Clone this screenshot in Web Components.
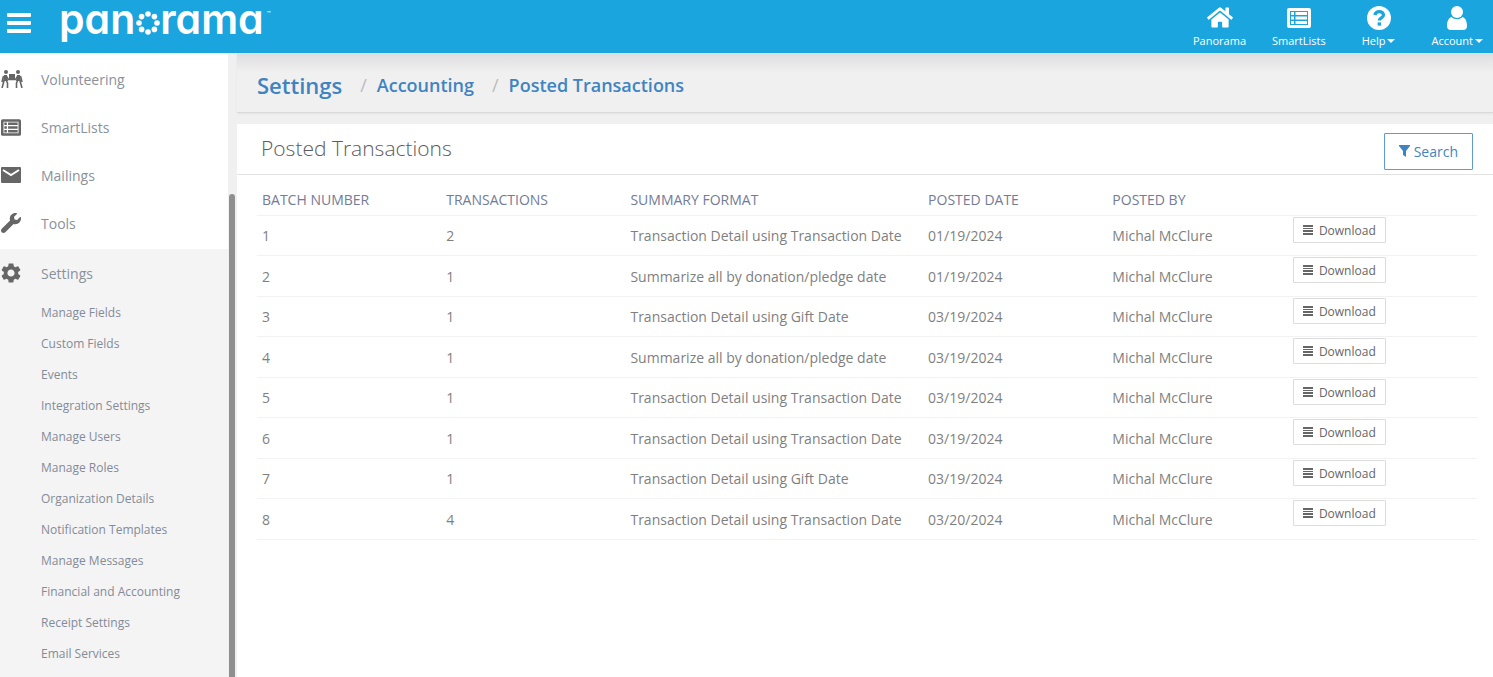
<!DOCTYPE html>
<html lang="en">
<head>
<meta charset="utf-8">
<title>Posted Transactions</title>
<style>
  body {
    margin: 0;
    font-family: "Open Sans", "Noto Sans", sans-serif;
    font-size: 14px;
    color: #7f7f7f;
    background: #fff;
  }
</style>
</head>
<body>
<app-shell>
  <top-bar slot="header">
    <top-link icon="home">Panorama</top-link>
    <top-link icon="list">SmartLists</top-link>
    <top-link icon="help" menu>Help</top-link>
    <top-link icon="user" menu>Account</top-link>
  </top-bar>

  <side-nav slot="nav">
    <nav-item icon="carry">Volunteering</nav-item>
    <nav-item icon="list">SmartLists</nav-item>
    <nav-item icon="mail">Mailings</nav-item>
    <nav-item icon="wrench">Tools</nav-item>
    <nav-group slot="open">
      <nav-item slot="title" icon="gear">Settings</nav-item>
      <sub-item>Manage Fields</sub-item>
      <sub-item>Custom Fields</sub-item>
      <sub-item>Events</sub-item>
      <sub-item>Integration Settings</sub-item>
      <sub-item>Manage Users</sub-item>
      <sub-item>Manage Roles</sub-item>
      <sub-item>Organization Details</sub-item>
      <sub-item>Notification Templates</sub-item>
      <sub-item>Manage Messages</sub-item>
      <sub-item>Financial and Accounting</sub-item>
      <sub-item>Receipt Settings</sub-item>
      <sub-item>Email Services</sub-item>
    </nav-group>
  </side-nav>

  <crumb-trail>
    <crumb-link first>Settings</crumb-link>
    <crumb-link>Accounting</crumb-link>
    <crumb-link>Posted Transactions</crumb-link>
  </crumb-trail>
  <content-panel>
    <span slot="title">Posted Transactions</span>
    <search-button slot="action">Search</search-button>
    <batch-table></batch-table>
  </content-panel>
</app-shell>

<script>
(function () {
  const icons = {
    home: ['0 0 576 512', '<path d="M280.37 148.26L96 300.11V464a16 16 0 0 0 16 16l112.06-.29a16 16 0 0 0 15.92-16V368a16 16 0 0 1 16-16h64a16 16 0 0 1 16 16v95.64a16 16 0 0 0 16 16.05L464 480a16 16 0 0 0 16-16V300L295.67 148.26a12.19 12.19 0 0 0-15.3 0zM571.6 251.47L488 182.56V44.05a12 12 0 0 0-12-12h-56a12 12 0 0 0-12 12v72.61L318.47 43a48 48 0 0 0-61 0L4.34 251.47a12 12 0 0 0-1.6 16.9l25.5 31A12 12 0 0 0 45.15 301l235.22-193.74a12.19 12.19 0 0 1 15.3 0L530.9 301a12 12 0 0 0 16.9-1.6l25.5-31a12 12 0 0 0-1.7-16.93z"/>'],
    list: ['0 0 24 20', '<path fill-rule="evenodd" d="M2 0h20a2 2 0 0 1 2 2v16a2 2 0 0 1-2 2H2a2 2 0 0 1-2-2V2a2 2 0 0 1 2-2zM3 3v14h18V3z"/><path d="M4 4h3v3H4zM4 8.500h3v3H4zM4 13h3v3H4zM8.500 4H20v3H8.500zM8.500 8.500H20v3H8.500zM8.500 13H20v3H8.500z"/>'],
    help: ['0 0 24 24', '<circle cx="12" cy="12" r="12"/><path d="M7.800 9c.6-2.200 2.200-3.400 4.400-3.400 2.500 0 4.300 1.400 4.300 3.500 0 2.900-4.200 2.700-4.200 5.500" fill="none" stroke="#1ba5df" stroke-width="3.200"/><rect x="10.600" y="16.400" width="3.400" height="3.200" fill="#1ba5df"/>'],
    user: ['0 0 20 24', '<circle cx="10" cy="6" r="6"/><path d="M4.500 11C7.500 14 12.500 14 15.500 11 18.500 12 20 15.500 20 20c0 2.500-1.500 4-3.500 4h-13C1.500 24 0 22.500 0 20c0-4.500 1.500-8 4.500-9z"/>'],
    carry: ['0 0 22 18', '<circle cx="5" cy="2" r="2"/><circle cx="17" cy="2" r="2"/><rect x="8" y="4" width="6" height="5"/><path d="M3 5h3l1 6H2zM16 5h3l1 6h-5z"/><path d="M5 6l2.500 3.500H11M17 6l-2.500 3.500H11M5 10l1.500 3v5M2.500 6L1 12M3 11l-2 7M17 10l-1.500 3v5M19.500 6l1.500 6M19 11l2 7" fill="none" stroke="currentColor" stroke-width="1.600"/>'],
    mail: ['0 0 20 16', '<path d="M1 0h18a1 1 0 0 1 1 1v14a1 1 0 0 1-1 1H1a1 1 0 0 1-1-1V1a1 1 0 0 1 1-1z"/><path d="M2 3l8 5 8-5" fill="none" stroke="#fff" stroke-width="2"/>'],
    wrench: ['0 0 512 512', '<path d="M507.730 109.100c-2.240-9.030-13.540-12.090-20.120-5.510l-74.360 74.360-67.880-11.310-11.310-67.880 74.360-74.360c6.620-6.620 3.430-17.900-5.660-20.160-47.380-11.740-99.550.91-136.580 37.930-39.640 39.640-50.550 97.100-34.050 147.200L18.740 402.760c-24.990 24.990-24.990 65.510 0 90.500 24.990 24.990 65.510 24.990 90.500 0l213.210-213.210c50.120 16.710 107.470 5.680 147.370-34.220 37.070-37.070 49.700-89.320 37.910-136.730z"/>'],
    gear: ['2 2 20 20', '<path d="M19.140 12.940c.04-.3.06-.61.06-.94 0-.32-.02-.64-.07-.94l2.030-1.580c.18-.14.23-.41.12-.61l-1.920-3.320c-.12-.22-.37-.29-.59-.22l-2.390.96c-.5-.38-1.030-.7-1.620-.94l-.36-2.540c-.04-.24-.24-.41-.48-.41h-3.840c-.24 0-.43.17-.47.41l-.36 2.540c-.59.24-1.130.57-1.620.94l-2.390-.96c-.22-.08-.47 0-.59.22L2.740 8.870c-.12.21-.08.47.12.61l2.030 1.580c-.05.3-.09.63-.09.94s.02.64.07.94l-2.030 1.580c-.18.14-.23.41-.12.61l1.920 3.320c.12.22.37.29.59.22l2.390-.96c.5.38 1.030.7 1.620.94l.36 2.540c.05.24.24.41.48.41h3.840c.24 0 .44-.17.47-.41l.36-2.540c.59-.24 1.130-.56 1.620-.94l2.390.96c.22.08.47 0 .59-.22l1.920-3.320c.12-.22.07-.47-.12-.61l-2.010-1.580zM12 15.600c-1.980 0-3.600-1.620-3.600-3.600s1.620-3.600 3.600-3.600 3.600 1.620 3.600 3.600-1.620 3.600-3.600 3.600z"/>'],
    filter: ['0 0 11 12', '<path d="M0 0h11v1L7 6v6L4 10V6L0 1z"/>'],
    rows: ['0 0 10 10', '<path d="M0 0h10v2H0zM0 3h10v1H0zM0 5h10v2H0zM0 8h10v2H0z"/>'],
    bars: ['0 0 24 20', '<rect width="24" height="4" rx="1"/><rect y="8" width="24" height="4" rx="1"/><rect y="16" width="24" height="4" rx="1"/>']
  };

  function svg(name, size) {
    const [box, body] = icons[name];
    return `<svg viewBox="${box}" width="${size[0]}" height="${size[1]}" fill="currentColor" aria-hidden="true">${body}</svg>`;
  }

  // registers an element whose shadow root is filled from render(host)
  function define(tag, render) {
    customElements.define(tag, class extends HTMLElement {
      constructor() {
        super();
        this.attachShadow({mode: "open"});
      }
      connectedCallback() {
        const tmpl = document.createElement('template');
        tmpl.innerHTML = render(this);
        this.shadowRoot.replaceChildren(tmpl.content.cloneNode(true));
      }
    });
  }

  define('app-shell', () => `<style>
    :host { display: flex; flex-direction: column; height: 100vh; }
    .body { flex: 1; min-height: 0; display: flex; overflow: hidden; }
    main { flex: 1; min-width: 0; display: flex; flex-direction: column; background: #f0f0f0; }
    </style>
    <slot name="header"></slot>
    <div class="body">
      <slot name="nav"></slot>
      <main><slot></slot></main>
    </div>`);

  define('top-bar', () => {
    let dots = '';
    for (let i = 0; i < 8; i++) {
      const a = Math.PI / 4 * i;
      dots += `<circle cx="${(12 + 9 * Math.sin(a)).toFixed(1)}" cy="${(12 + 9 * Math.cos(a)).toFixed(1)}" r="2.8"/>`;
    }
    return `<style>
    :host { display: flex; align-items: center; justify-content: space-between; height: 53px; padding: 0 10px 0 7px; color: #fff; background: #1ba5df; }
    .left { display: flex; align-items: center; gap: 28px; padding-bottom: 8px; }
    button { display: flex; padding: 0; border: 0; background: none; color: #fff; }
    .logo { color: #fff; text-decoration: none; font: 600 41px/36px Inter, sans-serif; font-feature-settings: "cv11"; padding-bottom: 8px; white-space: nowrap; }
    .o { position: relative; color: transparent; }
    .o svg { position: absolute; left: 1px; bottom: 9px; color: #fff; }
    sup { font-size: 6px; line-height: 6px; vertical-align: 18px; margin-left: 3px; }
    nav { display: flex; gap: 26px; }
    </style>
    <div class="left">
      <button aria-label="Menu">${svg('bars', [24, 20])}</button>
      <a class="logo" href="#">pan<span class="o">o<svg viewBox="0 0 24 24" width="24" height="24" fill="currentColor">${dots}</svg></span>rama<sup>™</sup></a>
    </div>
    <nav><slot></slot></nav>`;
  });

  const topSizes = {home: [26, 23], list: [24, 20], help: [24, 24], user: [20, 24]};
  define('top-link', el => `<style>
    :host { display: block; }
    :host([menu]) { margin-left: 10px; }
    a { display: flex; flex-direction: column; align-items: center; color: #fff; text-decoration: none; font-size: 11px; line-height: 14px; }
    .icon { display: flex; align-items: center; height: 24px; margin-bottom: 4px; }
    .label { display: flex; align-items: center; gap: 2px; }
    .caret { border: 4px solid transparent; border-top: 4px solid #fff; border-bottom: 0; }
    </style>
    <a href="#"><span class="icon">${svg(el.getAttribute('icon'), topSizes[el.getAttribute('icon')])}</span>
    <span class="label"><slot></slot>${el.hasAttribute('menu') ? '<i class="caret"></i>' : ''}</span></a>`);

  define('side-nav', () => `<style>
    :host { display: flex; width: 237px; flex: none; background: #fff; }
    nav { flex: 1; min-width: 0; display: flex; flex-direction: column; padding-top: 2px; }
    .track { width: 9px; box-sizing: border-box; padding: 141px 2px 0 1px; background: #f0f0f0; display: flex; }
    .thumb { flex: 1; background: #8f8f8f; border-radius: 3px 3px 0 0; }
    </style>
    <nav><slot></slot><slot name="open"></slot></nav>
    <div class="track"><div class="thumb"></div></div>`);

  const navSizes = {carry: [22, 18], list: [20, 17], mail: [20, 16], wrench: [20, 24], gear: [20, 20]};
  define('nav-item', el => `<style>
    :host { display: block; }
    a { display: flex; align-items: center; height: 48px; color: #8a919c; text-decoration: none; font-size: 14px; }
    .icon { display: flex; width: 40px; padding-left: 1px; color: #666; }
    </style>
    <a href="#"><span class="icon">${svg(el.getAttribute('icon'), navSizes[el.getAttribute('icon')])}</span><slot></slot></a>`);

  define('nav-group', () => `<style>
    :host { display: block; flex: 1; margin-top: 2px; background: #f4f4f4; }
    </style>
    <slot name="title"></slot><slot></slot>`);

  define('sub-item', () => `<style>
    :host { display: block; }
    a { display: block; padding-left: 41px; color: #848b98; text-decoration: none; font-size: 12px; line-height: 31px; }
    </style>
    <a href="#"><slot></slot></a>`);

  define('crumb-trail', () => `<style>
    :host { display: block; background: linear-gradient(#dedede, #f0f0f0 20px); border-bottom: 1px solid #dadada; box-shadow: 0 1px 2px #e4e4e4; margin-bottom: 11px; }
    nav { display: flex; align-items: center; height: 59px; padding: 4px 20px 0; box-sizing: border-box; }
    </style>
    <nav><slot></slot></nav>`);

  define('crumb-link', el => `<style>
    :host { display: block; font-size: 18px; font-weight: 600; }
    :host([first]) { font-size: 22px; }
    a { color: #3f84c1; text-decoration: none; }
    .sep { color: #bbb; font-weight: 400; padding: 0 10px 0 18px; }
    </style>
    ${el.hasAttribute('first') ? '' : '<span class="sep">/</span>'}<a href="#"><slot></slot></a>`);

  define('content-panel', () => `<style>
    :host { display: block; flex: 1; background: #fff; }
    header { display: flex; align-items: center; justify-content: space-between; height: 50px; padding: 0 20px 0 24px; border-bottom: 1px solid #e2e2e2; }
    h1 { margin: 0; padding-bottom: 2px; font-size: 21px; font-weight: 300; color: #5c5c5c; }
    .content { padding: 8px 16px 0 20px; }
    </style>
    <header><h1><slot name="title"></slot></h1><slot name="action"></slot></header>
    <div class="content"><slot></slot></div>`);

  define('search-button', () => `<style>
    :host { display: block; padding-top: 4px; }
    button { display: flex; align-items: center; gap: 4px; height: 37px; padding: 0 14px; border: 1px solid #5f9bd0; border-radius: 1px; background: #fff; color: #3f84c1; font: 14px "Open Sans", sans-serif; }
    </style>
    <button>${svg('filter', [11, 12])}<slot></slot></button>`);

  define('download-button', () => `<style>
    :host { display: block; }
    button { display: flex; align-items: center; gap: 6px; height: 26px; padding: 0 9px; border: 1px solid #dcdcdc; border-radius: 1px; background: #fff; color: #666; font: 12px "Open Sans", sans-serif; }
    </style>
    <button>${svg('rows', [10, 10])}<slot></slot></button>`);

  const detail = 'Transaction Detail using Transaction Date';
  const gift = 'Transaction Detail using Gift Date';
  const summary = 'Summarize all by donation/pledge date';
  const batches = [
    [1, 2, detail, '01/19/2024'],
    [2, 1, summary, '01/19/2024'],
    [3, 1, gift, '03/19/2024'],
    [4, 1, summary, '03/19/2024'],
    [5, 1, detail, '03/19/2024'],
    [6, 1, detail, '03/19/2024'],
    [7, 1, gift, '03/19/2024'],
    [8, 4, detail, '03/20/2024']
  ];
  define('batch-table', () => `<style>
    :host { display: block; }
    table { width: 100%; border-collapse: separate; border-spacing: 0; table-layout: fixed; font-size: 14px; }
    th, td { padding: 0 5px; text-align: left; font-weight: 400; border-bottom: 1px solid #f2f2f2; white-space: nowrap; box-sizing: border-box; }
    th { height: 33px; color: #737b98; }
    td { height: 40px; }
    tr:nth-child(even) td { height: 41px; }
    td:last-child { vertical-align: top; padding-top: 1px; }
    .c1 { width: 15.1%; }
    .c2 { width: 24.4%; }
    .c3 { width: 14.8%; }
    </style>
    <table>
      <colgroup><col class="c1"><col class="c1"><col class="c2"><col class="c1"><col class="c3"><col></colgroup>
      <thead><tr><th>BATCH NUMBER</th><th>TRANSACTIONS</th><th>SUMMARY FORMAT</th><th>POSTED DATE</th><th>POSTED BY</th><th></th></tr></thead>
      <tbody>${batches.map(row => `<tr>${row.map(v => `<td>${v}</td>`).join('')}<td>Michal McClure</td><td><download-button>Download</download-button></td></tr>`).join('')}</tbody>
    </table>`);
})();
</script>
</body>
</html>
